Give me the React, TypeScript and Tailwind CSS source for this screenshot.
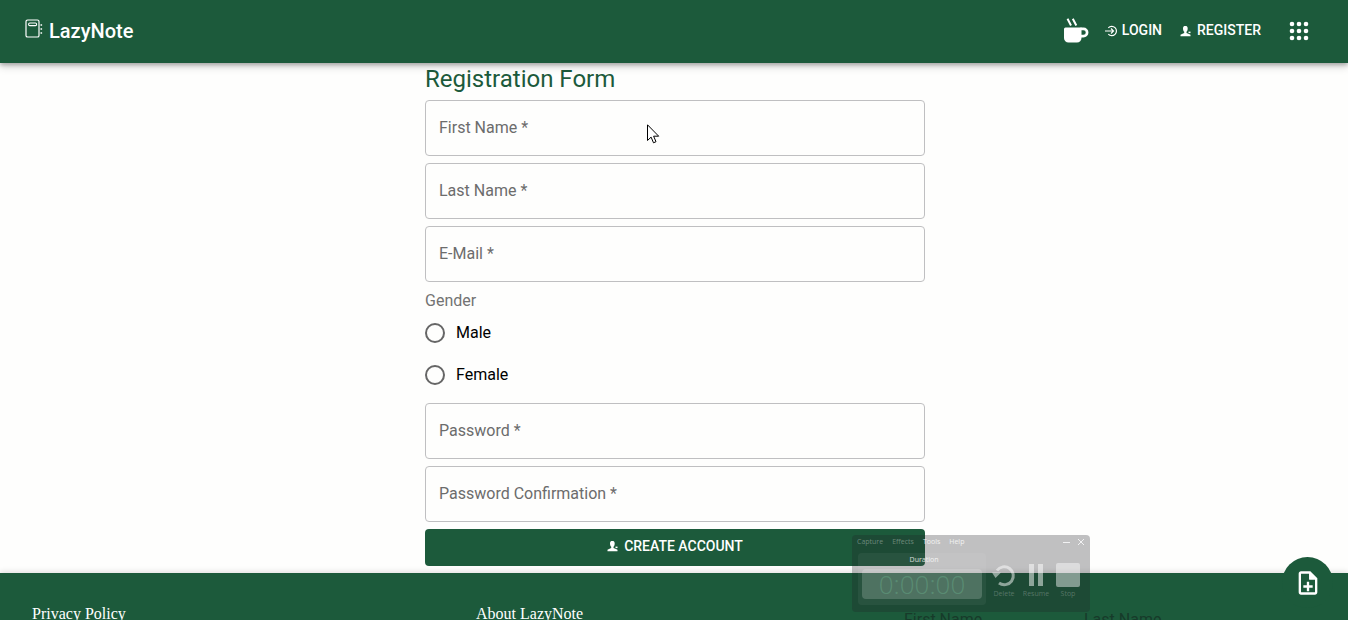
import React from "react";

function NotebookIcon() {
  return (
    <svg width="18" height="20" viewBox="0 0 18 20" fill="none" stroke="currentColor" aria-hidden="true">
      <rect x="1" y="1" width="13" height="17" rx="1.6" strokeWidth="1.2" />
      <rect x="3.6" y="4" width="8" height="2.6" rx="1.2" strokeWidth="1.1" />
      <path d="M15.500 6h1.600M15.500 10h1.600M15.500 14h1.600" strokeWidth="1.600" />
    </svg>
  );
}

function CoffeeIcon() {
  return (
    <svg width="26" height="26" viewBox="0 0 26 26" fill="none" aria-hidden="true">
      <path d="M1 11a1.500 1.500 0 0 1 1.500-1.500H18.500V20A4.500 4.500 0 0 1 14 24.500H5.500A4.500 4.500 0 0 1 1 20Z" fill="currentColor" />
      <path d="M17.500 10.900h3a3.400 3.400 0 0 1 0 7.200h-3" stroke="currentColor" strokeWidth="2.700" />
      <path d="M4.500 0.800 8 7.500M9.800 0.800 13.300 7.500" stroke="currentColor" strokeWidth="2" />
    </svg>
  );
}

function LoginIcon() {
  return (
    <svg width="13" height="12" viewBox="0 0 13 12" fill="none" stroke="currentColor" strokeWidth="1.200" aria-hidden="true">
      <path d="M3.300 2.800A4.700 4.700 0 1 1 3.300 9.200" />
      <path d="M0 6h8.500M6 3.500 8.500 6 6 8.500" />
    </svg>
  );
}

function PersonIcon() {
  return (
    <svg width="12" height="12" viewBox="0 0 12 12" fill="currentColor" aria-hidden="true">
      <path d="M3 3.500C3 1.600 3.900 1 5.300 1S7.700 1.600 7.700 3.500c0 1.600-.5 2.500-1.200 3.200v1.400l2.500 1 1.500.7v1.400H.5V9.800L2 9l2.200-.9V6.700C3.500 6 3 5.100 3 3.500Z" />
      <path d="M8.500 6.600h2v1.500h-2z" />
    </svg>
  );
}

function AppsIcon() {
  return (
    <svg width="20" height="20" viewBox="0 0 20 20" fill="currentColor" aria-hidden="true">
      {[3, 10, 17].map((y) => [3, 10, 17].map((x) => <circle key={`${x}-${y}`} cx={x} cy={y} r="2.300" />))}
    </svg>
  );
}

function NoteAddIcon() {
  return (
    <svg width="28" height="28" viewBox="0 0 24 24" fill="currentColor" aria-hidden="true">
      <path d="M13 11h-2v3H8v2h3v3h2v-3h3v-2h-3zm1-9H6c-1.100 0-2 .9-2 2v16c0 1.100.89 2 1.990 2H18c1.100 0 2-.9 2-2V8l-6-6zm4 18H6V4h7v5h5v11z" />
      <path d="M13 3v6h6z" />
    </svg>
  );
}

function Field({ id, label, type = "text" }: { id: string; label: string; type?: string }) {
  return (
    <input
      id={id}
      name={id}
      type={type}
      aria-label={label}
      placeholder={`${label} *`}
      required
      className="block h-14 w-full rounded border border-[#bfbfc1] bg-transparent px-[13px] pb-0.5 text-base text-black shadow-none outline-none placeholder:text-[#6c6c6c] focus:border-[#1c5a3b]"
    />
  );
}

function GenderOption({ value }: { value: string }) {
  return (
    <label className="flex h-[42px] items-center gap-[11px] text-base text-black">
      <input
        type="radio"
        name="gender"
        value={value}
        className="h-5 w-5 appearance-none rounded-full border-2 border-[#666666] checked:border-[6px] checked:border-[#1c5a3b]"
      />
      <span>{value}</span>
    </label>
  );
}

function RecorderButton({ label, children }: { label: string; children: React.ReactNode }) {
  return (
    <button type="button" className="flex w-8 flex-col items-center gap-0.5 text-white/25">
      <span className="flex h-6 items-center text-white/50">{children}</span>
      <span className="text-[7px] leading-[9px]">{label}</span>
    </button>
  );
}

function Recorder() {
  return (
    <aside className="absolute right-[258px] bottom-2 w-[238px] rounded-sm bg-[#202028]/28 font-['Open_Sans',sans-serif]">
      <div className="flex h-[13px] items-center gap-[9px] px-[5px] text-[7px] leading-none text-white/50">
        <span className="text-white/35">Capture</span>
        <span className="text-white/35">Effects</span>
        <span className="text-white/80">Tools</span>
        <span className="text-white/80">Help</span>
        <svg className="ml-auto text-white/80" width="22" height="8" viewBox="0 0 22 8" stroke="currentColor" aria-hidden="true">
          <path d="M0 4.500h7M15 1l6 6M21 1l-6 6" />
        </svg>
      </div>
      <div className="flex h-16 items-start px-1.5 pt-[5px]">
        <div className="h-[52px] w-[130px] rounded-sm bg-white/5 px-1">
          <p className="h-4 pl-1 text-center text-[7px] leading-[14px] text-white/80">Duration</p>
          <div className="flex h-[30px] items-center justify-center rounded-sm bg-white/18 font-['Open_Sans',sans-serif] text-[26px] leading-none font-light text-[#5d9278]/80">
            0:00:00
          </div>
        </div>
        <div className="flex flex-1 justify-between pt-2.5 pl-0.5">
          <RecorderButton label="Delete">
            <svg width="24" height="24" viewBox="0 0 24 24" fill="none" stroke="currentColor" strokeWidth="3" aria-hidden="true">
              <path d="M5 7.500A9 9 0 1 1 7 20" />
              <path d="M0 9.500h9L3.500 15Z" fill="currentColor" stroke="none" />
            </svg>
          </RecorderButton>
          <RecorderButton label="Resume">
            <svg width="14" height="22" viewBox="0 0 14 22" fill="currentColor" aria-hidden="true">
              <path d="M0 0h5v22H0zM9 0h5v22H9z" />
            </svg>
          </RecorderButton>
          <RecorderButton label="Stop">
            <span className="block h-6 w-6 rounded-xs bg-white/45" />
          </RecorderButton>
        </div>
      </div>
    </aside>
  );
}

function Cursor() {
  return (
    <svg className="pointer-events-none absolute top-6 left-[222px]" width="13" height="20" viewBox="0 0 13 20" fill="white" stroke="black" strokeWidth="1" aria-hidden="true">
      <path d="M.5.800v15.700l3.600-3.400 2.400 5.700 2.500-1.100-2.400-5.500h5.100Z" />
    </svg>
  );
}

export default function App() {
  return (
    <div className="relative flex h-screen flex-col overflow-hidden bg-[#fefefd] font-[Roboto,sans-serif]">
      <header className="z-10 flex h-[63px] shrink-0 items-center bg-[#1c5a3b] px-6 pb-0.5 text-white shadow-[0_2px_4px_rgba(0,0,0,0.25),0_4px_8px_rgba(0,0,0,0.15)]">
        <a href="#home" className="flex items-center gap-1.5 pl-px">
          <span className="pb-1"><NotebookIcon /></span>
          <span className="text-xl font-medium">LazyNote</span>
        </a>
        <nav className="ml-auto flex items-center pr-[15px] text-sm font-medium">
          <a href="#coffee" aria-label="Coffee" className="mr-4"><CoffeeIcon /></a>
          <a href="#login" className="mr-[18px] flex items-center gap-1">
            <LoginIcon />
            <span className="pb-0.5">LOGIN</span>
          </a>
          <a href="#register" className="mr-6 flex items-center gap-[5px]">
            <PersonIcon />
            <span className="pr-1 pb-0.5">REGISTER</span>
          </a>
          <button type="button" aria-label="Apps"><AppsIcon /></button>
        </nav>
      </header>

      <main className="flex shrink-0 justify-center pb-[7px] pl-0.5">
        <form className="flex w-full max-w-[500px] flex-col gap-[7px]">
          <h1 className="-mb-[7px] h-[37px] text-2xl leading-8 text-[#1c5a3b]">Registration Form</h1>
          <div className="relative">
            <Field id="firstName" label="First Name" />
            <Cursor />
          </div>
          <Field id="lastName" label="Last Name" />
          <Field id="email" label="E-Mail" type="email" />
          <fieldset>
            <legend className="h-[23px] text-base leading-[23px] text-[#737373]">Gender</legend>
            <GenderOption value="Male" />
            <GenderOption value="Female" />
          </fieldset>
          <Field id="password" label="Password" type="password" />
          <Field id="passwordConfirmation" label="Password Confirmation" type="password" />
          <button
            type="button"
            className="flex h-[37px] items-center justify-center gap-[5px] rounded bg-[#1c5a3b] pb-1 text-sm font-medium text-white"
          >
            <PersonIcon />
            CREATE ACCOUNT
          </button>
        </form>
      </main>

      <footer className="grid min-h-40 shrink-0 grid-cols-3 bg-[#1c5a3b] px-8 pt-8 font-['Liberation_Serif',serif] text-base leading-[18px] text-white shadow-[0_-2px_5px_rgba(0,0,0,0.1)]">
        <a href="#privacy">Privacy Policy</a>
        <a href="#about" className="pl-4">About LazyNote</a>
        <div className="flex pt-1.5 pl-4 font-[Roboto,sans-serif] text-[#173b2a]">
          <span className="w-45">First Name</span>
          <span>Last Name</span>
        </div>
      </footer>

      <button
        type="button"
        aria-label="Add note"
        className="absolute right-[15px] bottom-3 flex h-[51px] w-[51px] items-center justify-center rounded-full bg-[#1c5a3b] text-white"
      >
        <NoteAddIcon />
      </button>
      <Recorder />
    </div>
  );
}
